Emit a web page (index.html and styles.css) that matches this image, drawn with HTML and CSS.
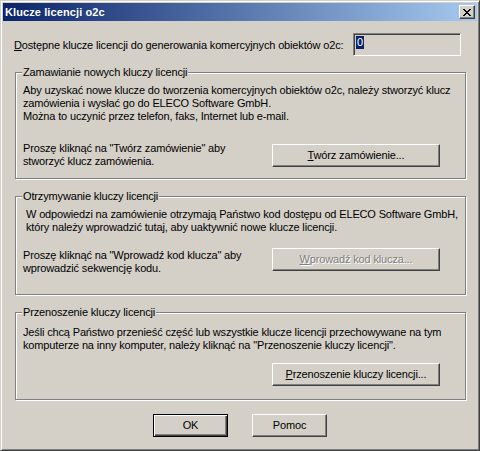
FILE: index.html
```html
<!DOCTYPE html>
<html lang="pl">
<head>
    <meta charset="UTF-8">
    <title>Klucze licencji o2c</title>
    <link rel="stylesheet" href="styles.css">
</head>
<body>
    <div class="window">
        <div class="title-bar">
            <span class="title">Klucze licencji o2c</span>
            <button class="close-button" type="button" aria-label="Zamknij">
                <svg width="8" height="7" viewBox="0 0 8 7" shape-rendering="crispEdges">
                    <path d="M0 0h2v1h-2z M6 0h2v1h-2z M1 1h2v1h-2z M5 1h2v1h-2z M2 2h4v1h-4z M3 3h2v1h-2z M2 4h4v1h-4z M1 5h2v1h-2z M5 5h2v1h-2z M0 6h2v1h-2z M6 6h2v1h-2z" fill="#000"/>
                </svg>
            </button>
        </div>

        <div class="content">
            <div class="keys-row">
                <label for="key-count"><u>D</u>ostępne klucze licencji do generowania komercyjnych obiektów o2c:</label>
                <div class="key-field" id="key-count"><span class="selected">0</span></div>
            </div>

            <!-- Ordering new keys -->
            <fieldset class="group group-order">
                <legend>Zamawianie nowych kluczy licencji</legend>
                <p class="info">Aby uzyskać nowe klucze do tworzenia komercyjnych obiektów o2c, należy stworzyć klucz<br>zamówienia i wysłać go do ELECO Software GmbH.<br>Można to uczynić przez telefon, faks, Internet lub e-mail.</p>
                <div class="action-row">
                    <p>Proszę kliknąć na "Twórz zamówienie" aby<br>stworzyć klucz zamówienia.</p>
                    <button class="push-button wide" type="button"><u>T</u>wórz zamówienie...</button>
                </div>
            </fieldset>

            <!-- Receiving keys -->
            <fieldset class="group group-receive">
                <legend>Otrzymywanie kluczy licencji</legend>
                <p class="info indent">W odpowiedzi na zamówienie otrzymają Państwo kod dostępu od ELECO Software GmbH,<br>który należy wprowadzić tutaj, aby uaktywnić nowe klucze licencji.</p>
                <div class="action-row">
                    <p>Proszę kliknąć na "Wprowadź kod klucza" aby<br>wprowadzić sekwencję kodu.</p>
                    <button class="push-button wide" type="button" disabled><u>W</u>prowadź kod klucza...</button>
                </div>
            </fieldset>

            <!-- Transferring keys -->
            <fieldset class="group group-transfer">
                <legend>Przenoszenie kluczy licencji</legend>
                <p class="info">Jeśli chcą Państwo przenieść część lub wszystkie klucze licencji przechowywane na tym<br>komputerze na inny komputer, należy kliknąć na "Przenoszenie kluczy licencji".</p>
                <div class="action-row">
                    <button class="push-button wide" type="button"><u>P</u>rzenoszenie kluczy licencji...</button>
                </div>
            </fieldset>

            <div class="dialog-buttons">
                <button class="push-button default" type="button">OK</button>
                <button class="push-button" type="button">Pomoc</button>
            </div>
        </div>
    </div>
</body>
</html>
```

FILE: styles.css
```css
/* Classic Windows dialog look */
* {
    box-sizing: border-box;
}

body {
    margin: 0;
    background-color: #d4d0c8;
    color: #000000;
    font-family: "Liberation Sans", Arial, sans-serif;
    font-size: 11px;
    line-height: 13px;
}

p {
    margin: 0;
    white-space: nowrap;
}

.window {
    width: 480px;
    height: 451px;
    padding: 2px;
    background-color: #d4d0c8;
    border: 1px solid;
    border-color: #d4d0c8 #404040 #404040 #d4d0c8;
    box-shadow: inset 1px 1px #ffffff, inset -1px -1px #808080;
}

/* Title bar */
.title-bar {
    display: flex;
    align-items: center;
    height: 18px;
    padding: 0 2px;
    background: linear-gradient(to right, #0a246a, #a6caf0);
}

.title {
    color: #ffffff;
    font-weight: bold;
    letter-spacing: 0.1px;
}

.close-button {
    display: flex;
    align-items: center;
    justify-content: center;
    width: 16px;
    height: 14px;
    margin-left: auto;
    padding: 0;
    background-color: #d4d0c8;
    border: 1px solid;
    border-color: #ffffff #404040 #404040 #ffffff;
    box-shadow: inset -1px -1px #808080;
}

.content {
    letter-spacing: -0.15px;
}

/* Key count row */
.keys-row {
    display: flex;
    align-items: flex-start;
    margin-top: 12px;
    padding: 0 16px 0 11px;
}

.keys-row label {
    margin-top: 6px;
    white-space: nowrap;
}

.key-field {
    flex-shrink: 0;
    width: 108px;
    height: 23px;
    margin-left: auto;
    padding: 2px 0 0 2px;
    background-color: #d4d0c8;
    border: 1px solid;
    border-color: #808080 #ffffff #ffffff #808080;
    box-shadow: inset 1px 1px #404040, inset -1px -1px #d4d0c8;
}

.selected {
    display: inline-block;
    padding: 0 1px 0 1px;
    background-color: #0a246a;
    color: #ffffff;
}

/* Group boxes */
.group {
    width: 451px;
    min-width: 0;
    margin: 11px 0 0 12px;
    padding: 0 0 10px 7px;
    border: 1px solid #808080;
    box-shadow: 1px 1px #ffffff, inset 1px 1px #ffffff;
}

.group legend {
    margin-left: -1px;
    padding: 0 1px;
    background-color: #d4d0c8;
}

.group-order {
    margin-top: 10px;
}

.info {
    margin-top: 5px;
}

.indent {
    padding-left: 3px;
}

.action-row {
    display: flex;
    align-items: flex-start;
    padding-right: 25px;
}

.action-row .push-button {
    margin-left: auto;
}

.group-order .action-row {
    margin-top: 19px;
}

.group-order .push-button {
    margin-top: 2px;
}

.group-receive {
    padding-bottom: 19px;
}

.group-receive .action-row {
    margin-top: 15px;
}

.group-receive .push-button {
    margin-top: -1px;
}

.group-transfer {
    padding-bottom: 13px;
}

.group-transfer .info {
    margin-top: 7px;
}

.group-transfer .action-row {
    margin-top: 11px;
}

/* Buttons */
.push-button {
    width: 75px;
    height: 23px;
    padding: 0;
    font: inherit;
    letter-spacing: inherit;
    color: #000000;
    background-color: #d4d0c8;
    border: 1px solid;
    border-color: #ffffff #404040 #404040 #ffffff;
    box-shadow: inset -1px -1px #808080;
}

.push-button.wide {
    width: 168px;
}

.push-button.default {
    border-color: #000000;
    box-shadow: inset 1px 1px #ffffff, inset -1px -1px #404040, inset -2px -2px #808080;
}

.push-button:disabled {
    color: #808080;
    text-shadow: 1px 1px #ffffff;
}

.dialog-buttons {
    display: flex;
    justify-content: center;
    gap: 24px;
    margin-top: 14px;
}
```
